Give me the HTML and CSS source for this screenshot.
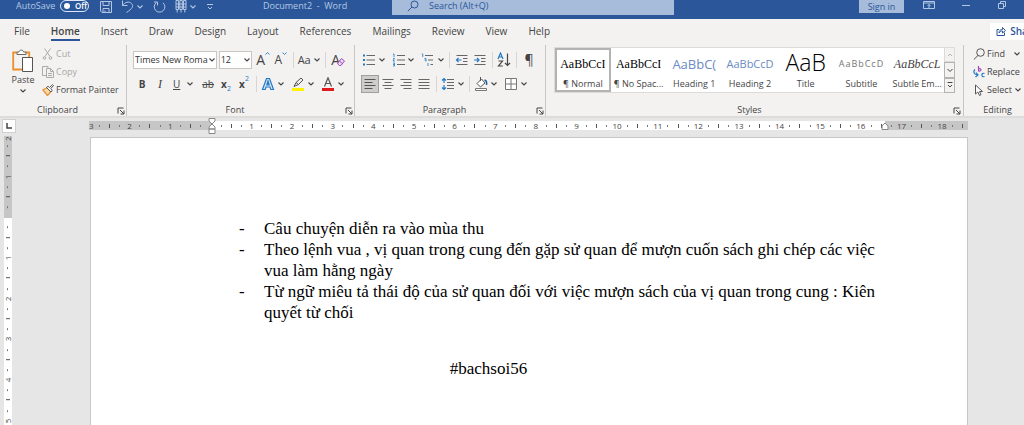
FILE: index.html
```html
<!DOCTYPE html>
<html lang="vi">
<head>
    <meta charset="UTF-8">
    <meta name="viewport" content="width=device-width, initial-scale=1.0">
    <title>Document2 - Word</title>
    <link rel="stylesheet" href="styles.css">
</head>
<body>
    <!-- Shared icons -->
    <svg class="defs" width="0" height="0">
        <symbol id="chev" viewBox="0 0 8 8"><path d="M1.500 2.500 4 5l2.500-2.500" fill="none" stroke="currentColor" stroke-width="1.100"/></symbol>
        <symbol id="launch" viewBox="0 0 8 8"><path d="M1 6.500V1h5.500M3 3l4 4M7 3.500V7H3.500" fill="none" stroke="currentColor"/></symbol>
    </svg>

    <header class="titlebar">
        <label class="autosave" for="autosave">AutoSave</label>
        <span class="toggle">
            <input type="checkbox" id="autosave">
            <span class="toggle-text">Off</span>
        </span>
        <div class="quick">
            <button aria-label="Save"><svg width="12" height="12" viewBox="0 0 12 12"><path d="M.5.5h11v11H2L.5 10zM3 .5v4h6v-4M3 11.500V7.500h6v4M5 11V9.500"/></svg></button>
            <button class="wide" aria-label="Undo"><svg width="13" height="13" viewBox="0 0 13 13"><path d="M1.500.5v5h5M1.500 5.500C4 2 8 1 10.500 3.500s1 5-5 9"/></svg><svg width="8" height="8"><use href="#chev"/></svg></button>
            <button aria-label="Redo"><svg width="13" height="13" viewBox="0 0 13 13"><path d="M3.500 2.500A5.300 5.300 0 1 0 10 2.800M1 2h3.500v3.500"/></svg></button>
            <button class="wide" aria-label="Columns"><svg width="12" height="13" viewBox="0 0 12 13"><path d="M1 .5h2.500v9H1zM4.800.5h2.500v9H4.800zM8.500.5H11v9H8.500zM1 4h10M1 7h10M2.200 9.500v3M6 9.500v3M9.800 9.500v3"/></svg><svg width="8" height="8"><use href="#chev"/></svg></button>
            <button aria-label="Customize toolbar"><svg width="8" height="8" viewBox="0 0 8 8"><path d="M1 1.500h6M2 4l2 2 2-2"/></svg></button>
        </div>
        <div class="doc-title">Document2&nbsp; -&nbsp; Word</div>
        <div class="search">
            <svg width="12" height="12" viewBox="0 0 12 12"><circle cx="7.500" cy="4.500" r="3.500"/><path d="M5 7 .8 11.200"/></svg>
            <input type="text" placeholder="Search (Alt+Q)" aria-label="Search">
        </div>
        <button class="signin">Sign in</button>
        <div class="window-buttons">
            <button aria-label="Ribbon display options"><svg width="12" height="10" viewBox="0 0 12 10"><path d="M.5 1.500h11v7H.5zM.5 3h11M6 8V4.500M4.500 6 6 4.500 7.500 6"/></svg></button>
            <button aria-label="Minimize"><svg width="10" height="10" viewBox="0 0 10 10"><path d="M1 5.500h8"/></svg></button>
            <button aria-label="Restore"><svg width="10" height="10" viewBox="0 0 10 10"><path d="M1.500 3.500h5v5h-5zM3.500 3V1.500h5v5H7"/></svg></button>
        </div>
    </header>

    <nav class="tabs">
        <a href="#">File</a>
        <a href="#" class="active">Home</a>
        <a href="#">Insert</a>
        <a href="#">Draw</a>
        <a href="#">Design</a>
        <a href="#">Layout</a>
        <a href="#">References</a>
        <a href="#">Mailings</a>
        <a href="#">Review</a>
        <a href="#">View</a>
        <a href="#">Help</a>
        <button class="share"><svg width="10" height="10" viewBox="0 0 10 10"><path d="M3 3.500H1v6h7.500V6.500M3 7c0-2.500 1.500-3.500 3.500-3.500V1.500l3 3-3 2.500V5C5 5 4 5.500 3 7z" fill="none" stroke="currentColor"/></svg>Share</button>
    </nav>

    <div class="ribbon">
        <section class="group clipboard">
            <div class="group-body">
                <button class="paste">
                    <svg width="22" height="24" viewBox="0 0 22 24"><path d="M10 20.500H1.200V3.500h4M13 3.500h4.200V8" fill="none" stroke="#e8912d" stroke-width="1.800"/><path d="M5 5.500V3h2C7 .5 11.500.5 11.500 3H14v2.500z" fill="#fff" stroke="#666"/><path d="M10.500 8.500h10v14h-10z" fill="#fff" stroke="#555"/></svg>
                    <span>Paste</span>
                    <svg width="8" height="8"><use href="#chev"/></svg>
                </button>
                <div class="stack">
                    <button class="line disabled"><svg width="12" height="12" viewBox="0 0 12 12"><path d="M2.500.5 8 8.500M8.500.5 3 8.500" stroke="#aaa"/><circle cx="2.500" cy="10" r="1.300" fill="none" stroke="#aaa"/><circle cx="8.500" cy="10" r="1.300" fill="none" stroke="#aaa"/></svg>Cut</button>
                    <button class="line disabled"><svg width="12" height="12" viewBox="0 0 12 12"><path d="M4 9.500H.5v-9H6V2M4.500 2.500h4l3 3v6h-7zM8.500 2.500v3h3M6 7.500h4M6 9.500h4" fill="none" stroke="#aaa"/></svg>Copy</button>
                    <button class="line"><svg width="12" height="12" viewBox="0 0 12 12"><path d="M.8 6 5.500 3.500l3.500 4L5.500 11.500z" fill="#f8d9a8" stroke="#e8912d" stroke-width="1.300"/><path d="M4.500 3.500 9 8l1.200-1.800L8.800 4.500l2.700-3-1-.8-3 2.800-1.500-1.200z" fill="#fff" stroke="#555"/></svg>Format Painter</button>
                </div>
            </div>
            <footer>Clipboard<button aria-label="Clipboard options"><svg width="8" height="8"><use href="#launch"/></svg></button></footer>
        </section>

        <section class="group font">
            <div class="group-body rows">
                <div class="row">
                    <span class="combo combo-font"><select aria-label="Font"><option>Times New Roma</option></select><svg width="8" height="8"><use href="#chev"/></svg></span>
                    <span class="combo combo-size"><select aria-label="Font size"><option>12</option></select><svg width="8" height="8"><use href="#chev"/></svg></span>
                    <button class="tool glyph" aria-label="Grow font">A<svg class="raise" width="5" height="12" viewBox="0 0 5 12"><path d="m.5 3.500 2-2 2 2" fill="none" stroke="#2e86c9"/></svg></button>
                    <button class="tool glyph small" aria-label="Shrink font">A<svg class="raise" width="5" height="12" viewBox="0 0 5 12"><path d="m.5 1.500 2 2 2-2" fill="none" stroke="#2e86c9"/></svg></button>
                    <i class="sep"></i>
                    <button class="split" aria-label="Change case"><span class="case">Aa</span><svg width="8" height="8"><use href="#chev"/></svg></button>
                    <i class="sep"></i>
                    <button class="tool glyph clear" aria-label="Clear formatting">A<svg width="8" height="14" viewBox="0 0 8 14"><path d="M.8 10 4.500 5.500l3 2.500L4 12.500H2.500L.8 11zM2.500 8l3 2.700" fill="#ecd9f2" stroke="#a04ab8"/></svg></button>
                </div>
                <div class="row">
                    <button class="tool"><b>B</b></button>
                    <button class="tool"><em>I</em></button>
                    <button class="split"><u>U</u><svg width="8" height="8"><use href="#chev"/></svg></button>
                    <button class="tool"><s>ab</s></button>
                    <button class="tool"><b>x</b><sub>2</sub></button>
                    <button class="tool"><b>x</b><sup>2</sup></button>
                    <i class="sep"></i>
                    <button class="split" aria-label="Text effects"><svg width="14" height="14" viewBox="0 0 14 14"><path d="M1.500 12.500 5.500 1.500h3l4 11H9.800L9 10H5l-.8 2.500zM5.800 7.800h2.400L7 4z" fill="#d5e8f8" stroke="#2478c4" stroke-width="1.200"/></svg><svg width="8" height="8"><use href="#chev"/></svg></button>
                    <button class="split" aria-label="Highlight"><svg width="14" height="14" viewBox="0 0 14 14"><path d="M3 9.500 5 5.500 10 1l2 2-4.500 4.500zM5 5.500l2.500 2" fill="#eee" stroke="#555"/><path d="M1 11h12v3H1z" fill="#fff200"/></svg><svg width="8" height="8"><use href="#chev"/></svg></button>
                    <button class="split" aria-label="Font colour"><svg width="14" height="14" viewBox="0 0 14 14"><path d="M3.500 9.500 7 .8l3.500 8.700M4.800 6.500h4.400" fill="none" stroke="#555" stroke-width="1.200"/><path d="M1 11h12v3H1z" fill="#e01b1b"/></svg><svg width="8" height="8"><use href="#chev"/></svg></button>
                </div>
            </div>
            <footer>Font<button aria-label="Font options"><svg width="8" height="8"><use href="#launch"/></svg></button></footer>
        </section>

        <section class="group paragraph">
            <div class="group-body rows">
                <div class="row">
                    <button class="split" aria-label="Bullets"><svg width="14" height="14" viewBox="0 0 14 14"><path d="M4.500 2.500H13M4.500 7H13M4.500 11.500H13" stroke="#666" stroke-width="1.200"/><path d="M1 1.500h2v2H1zM1 6h2v2H1zM1 10.500h2v2H1z" fill="#2478c4"/></svg><svg width="8" height="8"><use href="#chev"/></svg></button>
                    <button class="split" aria-label="Numbering"><svg width="14" height="14" viewBox="0 0 14 14"><path d="M5 2.500h8M5 7h8M5 11.500h8" stroke="#666" stroke-width="1.200"/><path d="M1 1h1v3M1 5.500h1.500L1 8h2M1 10h1.500v3H1M1 11.500h1" fill="none" stroke="#2e86c9" stroke-width=".9"/></svg><svg width="8" height="8"><use href="#chev"/></svg></button>
                    <button class="split" aria-label="Multilevel list"><svg width="14" height="14" viewBox="0 0 14 14"><path d="M4 2.500h8M7 7h5M9.500 11.500H12" stroke="#666" stroke-width="1.200"/><path d="M.8 1h1v3M3.500 5.500H5v3M3.500 7H5M7 10v3" fill="none" stroke="#2e86c9" stroke-width=".9"/></svg><svg width="8" height="8"><use href="#chev"/></svg></button>
                    <i class="sep"></i>
                    <button class="tool" aria-label="Decrease indent"><svg width="14" height="14" viewBox="0 0 14 14"><path d="M1.500 2.500h11M8 5.500h4.500M8 8.500h4.500M1.500 11.500h11" stroke="#666" stroke-width="1.100"/><path d="M6.500 7h-5M3.500 5l-2 2 2 2" fill="none" stroke="#2478c4" stroke-width="1.200"/></svg></button>
                    <button class="tool" aria-label="Increase indent"><svg width="14" height="14" viewBox="0 0 14 14"><path d="M1.500 2.500h11M8 5.500h4.500M8 8.500h4.500M1.500 11.500h11" stroke="#666" stroke-width="1.100"/><path d="M1 7h5M4 5l2 2-2 2" fill="none" stroke="#2478c4" stroke-width="1.200"/></svg></button>
                    <i class="sep"></i>
                    <button class="tool" aria-label="Sort"><svg width="14" height="16" viewBox="0 0 14 16"><path d="m1 7 2.500-6L6 7M2 5h3" fill="none" stroke="#2478c4" stroke-width="1.200"/><path d="M1.500 9h4l-4 5h4.300M10.500 1.500v12M8 11l2.500 2.500L13 11" fill="none" stroke="#444" stroke-width="1.200"/></svg></button>
                    <i class="sep"></i>
                    <button class="tool pilcrow" aria-label="Show marks">¶</button>
                </div>
                <div class="row">
                    <button class="tool pressed" aria-label="Align left"><svg width="14" height="14" viewBox="0 0 14 14"><path d="M1.500 2.500h11M1.500 5.500h8M1.500 8.500h11M1.500 11.500h8" stroke="#555" stroke-width="1.200"/></svg></button>
                    <button class="tool" aria-label="Center"><svg width="14" height="14" viewBox="0 0 14 14"><path d="M1.500 2.500h11M3.500 5.500h7M1.500 8.500h11M3.500 11.500h7" stroke="#666" stroke-width="1.200"/></svg></button>
                    <button class="tool" aria-label="Align right"><svg width="14" height="14" viewBox="0 0 14 14"><path d="M1.500 2.500h11M4.500 5.500h8M1.500 8.500h11M4.500 11.500h8" stroke="#666" stroke-width="1.200"/></svg></button>
                    <button class="tool" aria-label="Justify"><svg width="14" height="14" viewBox="0 0 14 14"><path d="M1.500 2.500h11M1.500 5.500h11M1.500 8.500h11M1.500 11.500h11" stroke="#666" stroke-width="1.200"/></svg></button>
                    <i class="sep"></i>
                    <button class="split" aria-label="Line spacing"><svg width="14" height="14" viewBox="0 0 14 14"><path d="M6 2.500h7M6 5.500h7M6 8.500h7M6 11.500h7" stroke="#666" stroke-width="1.100"/><path d="M3 1.500v4.500M1 3.500l2-2 2 2M3 8v4.500M1 10.500l2 2 2-2" fill="none" stroke="#2478c4" stroke-width="1.200"/></svg><svg width="8" height="8"><use href="#chev"/></svg></button>
                    <i class="sep"></i>
                    <button class="split" aria-label="Shading"><svg width="14" height="14" viewBox="0 0 14 14"><path d="m3 6.500 4.500-4.500 3.500 4-4.500 4zM6.500 0v4" fill="#fff" stroke="#555"/><path d="M10.500 3c2 .5 2.500 2 2 5" fill="none" stroke="#1f5f9e" stroke-width="1.500"/><path d="M1.500 11.500h11v2h-11z" fill="#fff" stroke="#777"/></svg><svg width="8" height="8"><use href="#chev"/></svg></button>
                    <button class="split" aria-label="Borders"><svg width="14" height="14" viewBox="0 0 14 14"><path d="M1.500 1.500h11v11h-11zM7 1.500v11M1.500 7h11" fill="#fff" stroke="#777"/></svg><svg width="8" height="8"><use href="#chev"/></svg></button>
                </div>
            </div>
            <footer>Paragraph<button aria-label="Paragraph options"><svg width="8" height="8"><use href="#launch"/></svg></button></footer>
        </section>

        <section class="group styles">
            <div class="gallery">
                <button class="style selected"><span class="preview serif">AaBbCcI</span><span>¶ Normal</span></button>
                <button class="style"><span class="preview serif">AaBbCcI</span><span>¶ No Spac...</span></button>
                <button class="style"><span class="preview h1">AaBbC(</span><span>Heading 1</span></button>
                <button class="style"><span class="preview h2">AaBbCcD</span><span>Heading 2</span></button>
                <button class="style"><span class="preview title">AaB</span><span>Title</span></button>
                <button class="style"><span class="preview subtitle">AaBbCcD</span><span>Subtitle</span></button>
                <button class="style"><span class="preview emphasis">AaBbCcL</span><span>Subtle Em...</span></button>
                <div class="scroller">
                    <button class="off" aria-label="Previous styles"><svg width="8" height="8" viewBox="0 0 8 8"><path d="m2 5 2-2 2 2"/></svg></button>
                    <button aria-label="Next styles"><svg width="8" height="8" viewBox="0 0 8 8"><path d="m1.500 3 2.500 2.500L6.500 3"/></svg></button>
                    <button aria-label="All styles"><svg width="8" height="8" viewBox="0 0 8 8"><path d="M1.500 1.500h5M2 4l2 2 2-2"/></svg></button>
                </div>
            </div>
            <footer>Styles<button aria-label="Styles options"><svg width="8" height="8"><use href="#launch"/></svg></button></footer>
        </section>

        <section class="group editing">
            <div class="stack">
                <button class="line"><svg width="12" height="12" viewBox="0 0 12 12"><circle cx="7.500" cy="4.500" r="3.800" fill="none" stroke="#555"/><path d="M5 7.500.8 11.500" stroke="#555"/></svg>Find<svg class="after" width="8" height="8"><use href="#chev"/></svg></button>
                <button class="line"><svg width="12" height="12" viewBox="0 0 12 12"><path d="M5.500 0v5.500M5.500 3c3-1.500 3.500 2.500 0 2" fill="none" stroke="#a04ab8" stroke-width="1.200"/><path d="M2 3.500C0 5.500.5 8 4.500 9M3 6.500 5 9l-2.500 2M11.500 7.500C8 6 8 12 11.500 10.500" fill="none" stroke="#2478c4" stroke-width="1.200"/></svg>Replace</button>
                <button class="line"><svg width="12" height="12" viewBox="0 0 12 12"><path d="M2.500 1v9l2.300-2 1.700 3.500 1.500-.8L6.500 7.500h3z" fill="#fff" stroke="#555"/></svg>Select<svg width="8" height="8"><use href="#chev"/></svg></button>
            </div>
            <footer>Editing</footer>
        </section>
    </div>

    <main class="workspace">
        <div class="side">
            <button class="tab-stop" aria-label="Tab stop"><svg width="6" height="6" viewBox="0 0 6 6"><path d="M1 0v5h5" fill="none" stroke="#444" stroke-width="1.500"/></svg></button>
            <div class="vruler" id="vruler"></div>
        </div>
        <div class="canvas">
            <div class="hruler" id="hruler">
                <svg class="marker first" width="8" height="16" viewBox="0 0 8 16"><path d="M1 .5h6V3L4 6 1 3zM4 6l3 3v2H1V9zM1 11h6v4.500H1z" fill="#fff" stroke="#888"/></svg>
                <svg class="marker right" width="8" height="16" viewBox="0 0 8 16"><path d="m4 5 3 3v3.500H1V8z" fill="#fff" stroke="#888"/></svg>
            </div>
            <article class="page">
                <ul>
                    <li>Câu chuyện diễn ra vào mùa thu</li>
                    <li>Theo lệnh vua , vị quan trong cung đến gặp sử quan để mượn cuốn sách ghi chép các việc vua làm hằng ngày</li>
                    <li>Từ ngữ miêu tả thái độ của sử quan đối với việc mượn sách của vị quan trong cung : Kiên quyết từ chối</li>
                </ul>
                <p>#bachsoi56</p>
            </article>
        </div>
    </main>

    <script>
        // One cell per quarter of a centimetre, the number sits on the whole ones
        function addTicks(ruler, from, to) {
            for (let q = from * 4; q <= to * 4; q++) {
                const cell = document.createElement('span');
                if (q % 4 === 0) {
                    cell.textContent = q === 0 ? '' : Math.abs(q / 4);
                } else {
                    cell.className = q % 2 === 0 ? 'half' : 'quarter';
                }
                ruler.appendChild(cell);
            }
        }

        addTicks(document.getElementById('hruler'), -3, 18.5);
        addTicks(document.getElementById('vruler'), -2, 8);
    </script>
</body>
</html>
```
FILE: styles.css
```css
:root {
    --blue: #2b579a;
    --blue-light: #a6bcda;
    --ribbon: #f3f2f1;
    --canvas: #e6e6e6;
    --line: #c8c6c4;
    --text: #444;
    --ui: "Open Sans", "Noto Sans", sans-serif;
}

* {
    box-sizing: border-box;
}

body {
    margin: 0;
    height: 100vh;
    display: flex;
    flex-direction: column;
    overflow: hidden;
    background: var(--canvas);
    color: var(--text);
    font: 9px/14px var(--ui);
}

button {
    display: flex;
    align-items: center;
    justify-content: center;
    padding: 0;
    border: 0;
    background: none;
    color: inherit;
    font: inherit;
    white-space: nowrap;
}

svg {
    flex: none;
}

.defs {
    position: absolute;
}

/* Title bar */
.titlebar {
    display: flex;
    align-items: flex-start;
    flex: none;
    height: 19px;
    padding-left: 16px;
    background: var(--blue);
    color: #b4c7e2;
    line-height: 12px;
}

.titlebar svg {
    fill: none;
    stroke: currentColor;
}

.autosave {
    width: 44px;
    white-space: nowrap;
}

.toggle {
    display: flex;
    align-items: center;
    gap: 5px;
    width: 29px;
    height: 12px;
    padding-left: 3px;
    border: 1px solid #dce6f4;
    border-radius: 6px;
    color: #fff;
    font-size: 8px;
    font-weight: 600;
    line-height: 10px;
}

.toggle input {
    appearance: none;
    width: 6px;
    height: 6px;
    margin: 0;
    border-radius: 50%;
    background: #fff;
}

.quick {
    display: flex;
    align-items: center;
    gap: 9px;
    height: 13px;
    margin-left: 11px;
}

.quick .wide {
    gap: 2px;
}

.doc-title {
    margin-left: 49px;
    white-space: nowrap;
}

.search {
    display: flex;
    align-items: center;
    flex: 0 1 282px;
    gap: 10px;
    height: 15px;
    margin-left: auto;
    padding: 0 0 3px 15px;
    background: var(--blue-light);
    color: var(--blue);
}

.search input {
    flex: 1;
    min-width: 0;
    height: 12px;
    padding: 0;
    border: 0;
    background: none;
    font: inherit;
}

.search input::placeholder {
    color: var(--blue);
}

.signin {
    width: 45px;
    height: 13px;
    margin-left: 185px;
    background: var(--blue-light);
    color: var(--blue);
}

.window-buttons {
    display: flex;
    gap: 26px;
    padding: 0 17px 0 19px;
}

/* Tabs */
.tabs {
    display: flex;
    align-items: center;
    flex: none;
    gap: 21px;
    height: 26px;
    padding: 0 0 2px 14px;
    background: var(--ribbon);
    font-size: 10px;
}

.tabs a {
    padding: 2px 0 1px;
    border-bottom: 2px solid transparent;
    color: inherit;
    text-decoration: none;
    line-height: 14px;
}

.tabs .active {
    border-color: var(--blue);
    font-weight: 600;
}

.share {
    flex: none;
    gap: 4px;
    height: 17px;
    margin: 0 -20px 0 auto;
    padding: 0 6px;
    background: #fff;
    color: var(--blue);
    font-weight: 600;
}

/* Ribbon */
.ribbon {
    display: flex;
    flex: none;
    height: 73px;
    background: var(--ribbon);
    border-bottom: 2px solid #dedcda;
}

.group {
    display: flex;
    flex-direction: column;
    justify-content: space-between;
    flex: none;
    padding: 2px 7px 0 6px;
    border-right: 1px solid var(--line);
}

.group footer {
    position: relative;
    height: 13px;
    padding-right: 10px;
    line-height: 13px;
    text-align: center;
}

.group footer button {
    position: absolute;
    right: -6px;
    top: 4px;
}

.group-body {
    display: flex;
}

.clipboard {
    width: 127px;
}

.paste {
    flex: none;
    flex-direction: column;
    width: 34px;
    height: 50px;
}

.stack {
    display: flex;
    flex-direction: column;
    gap: 4px;
}

.clipboard .stack {
    margin-left: 2px;
}

.line {
    justify-content: flex-start;
    gap: 2px;
    height: 14px;
}

.disabled {
    color: #a8a6a4;
}

.font {
    width: 228px;
}

.paragraph {
    width: 191px;
}

.rows {
    flex-direction: column;
    gap: 6px;
    padding-top: 4px;
}

.row {
    display: flex;
    align-items: center;
    height: 18px;
}

.tool {
    width: 18px;
    height: 18px;
    font-size: 10px;
}

.split {
    width: 26px;
    height: 18px;
    font-size: 10px;
    justify-content: space-between;
    padding: 0 1px;
}

.split u {
    margin-left: 3px;
}

.split + .split,
.split + .tool {
    margin-left: 4px;
}

.sep {
    width: 1px;
    height: 16px;
    margin: 0 3px;
    background: #d8d6d4;
}

.combo {
    position: relative;
}

.combo-font {
    width: 85px;
    margin-right: 2px;
}

.combo-size {
    width: 34px;
    margin-right: 2px;
}

.combo select {
    appearance: none;
    display: block;
    width: 100%;
    height: 18px;
    padding: 0 1px;
    border: 1px solid var(--line);
    border-radius: 0;
    background: #fff;
    color: #333;
    font: inherit;
}

.combo svg {
    position: absolute;
    right: 1px;
    top: 5px;
}

.glyph {
    font-size: 14px;
}

.small {
    font-size: 12px;
}

.raise {
    align-self: flex-start;
}

.clear svg {
    margin-left: -3px;
}

.case {
    font-size: 11px;
}

.tool em {
    font-family: "Liberation Serif", serif;
    font-size: 12px;
}

.tool sub,
.tool sup {
    color: #2478c4;
    font-size: 7px;
    line-height: 8px;
}

.tool sub {
    align-self: flex-end;
}

.tool sup {
    align-self: flex-start;
}

.pilcrow {
    font-size: 14px;
}

.pressed {
    border: 1px solid #a19f9d;
    background: #cfcdcb;
}

/* Styles gallery */
.styles {
    flex: 1;
    min-width: 0;
    padding: 2px 8px 0;
}

.gallery {
    display: flex;
    height: 46px;
    border: 1px solid #dddbd9;
    background: #fff;
}

.style {
    flex: 1 1 0;
    flex-direction: column;
    justify-content: flex-start;
    min-width: 0;
    padding-top: 3px;
    overflow: hidden;
}

.selected {
    outline: 2px solid #b5b3b1;
    outline-offset: -2px;
}

.preview {
    height: 26px;
    line-height: 26px;
    color: #222;
}

.serif {
    font-family: "Liberation Serif", serif;
    font-size: 12px;
    color: #000;
}

.h1 {
    color: #6a8bc3;
    font-size: 13px;
}

.h2 {
    color: #6a8bc3;
    font-size: 11px;
}

.title {
    font-size: 23px;
    font-weight: 300;
    line-height: 22px;
    color: #000;
}

.subtitle {
    color: #777;
    font-size: 9px;
    letter-spacing: 1px;
}

.emphasis {
    font-family: "Liberation Serif", serif;
    font-size: 12px;
    font-style: italic;
    color: #444;
}

.scroller {
    display: flex;
    flex-direction: column;
    width: 11px;
    margin: -1px;
}

.scroller button {
    flex: 1;
    border: 1px solid #b5b3b1;
    background: var(--ribbon);
}

.scroller .off {
    border-color: #dddbd9;
    color: #b5b3b1;
}

.scroller svg {
    fill: none;
    stroke: currentColor;
}

.editing {
    width: 60px;
    padding: 2px 0 0 9px;
    border: 0;
}

.editing .after {
    margin-left: 6px;
}

.editing footer {
    padding-right: 2px;
}

/* Workspace */
.workspace {
    display: flex;
    flex: 1;
    min-height: 0;
    overflow: hidden;
}

.side {
    flex: none;
    width: 18px;
    padding: 1px 2px;
}

.tab-stop {
    width: 14px;
    height: 14px;
    border: 1px solid #d0d0d0;
    background: #fff;
}

.vruler {
    display: flex;
    flex-direction: column;
    width: 8px;
    height: 412px;
    margin: 3px 2px 0;
    background: linear-gradient(#c6c6c6 82px, #fff 82px);
    font-size: 8px;
}

.vruler span {
    display: flex;
    align-items: center;
    justify-content: center;
    flex: 1 1 0;
    min-height: 0;
    line-height: 8px;
    writing-mode: vertical-rl;
    transform: rotate(180deg);
}

.vruler span:first-of-type {
    flex-grow: .5;
}

.vruler .half::before {
    content: "";
    width: 4px;
    height: 1px;
    background: #555;
}

.canvas {
    display: flex;
    flex-direction: column;
    flex: 1;
    min-width: 0;
}

.hruler {
    position: relative;
    display: flex;
    align-items: center;
    flex: none;
    height: 9px;
    margin: 3px 56px 7px 71px;
    background: linear-gradient(to right, #c6c6c6 14%, #fff 14%, #fff 90.600%, #c6c6c6 90.600%);
    font-size: 8px;
    line-height: 9px;
}

.hruler span {
    display: flex;
    justify-content: center;
    flex: 1 1 0;
    min-width: 0;
}

.hruler span:first-of-type {
    flex-grow: .5;
    justify-content: flex-start;
}

.hruler .half::before {
    content: "";
    width: 1px;
    height: 4px;
    background: #555;
}

.hruler .quarter::before,
.vruler .quarter::before {
    content: "";
    width: 1px;
    height: 2px;
    background: #777;
}

.marker {
    position: absolute;
    top: -3px;
    margin-left: -4px;
}

.first {
    left: 14%;
}

.right {
    left: 90.600%;
}

.page {
    flex: 1;
    margin: 0 56px 0 72px;
    padding: 80px 82px 0 148px;
    border: 1px solid #c6c6c6;
    border-bottom: 0;
    background: #fff;
    color: #000;
    font: 17px/21px "Liberation Serif", serif;
}

.page ul {
    margin: 0;
    padding: 0;
    list-style: none;
}

.page li {
    position: relative;
    padding-left: 25px;
}

.page li::before {
    content: "-";
    position: absolute;
    left: 0;
}

.page p {
    margin: 35px 0 0;
    padding-right: 147px;
    text-align: center;
}
```
